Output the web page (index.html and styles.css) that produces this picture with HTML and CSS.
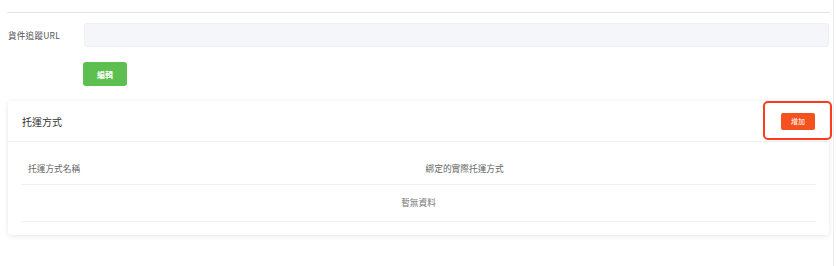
FILE: index.html
```html
<!DOCTYPE html>
<html lang="zh-Hant">

<head>
  <meta charset="UTF-8">
  <meta name="viewport" content="width=device-width, initial-scale=1.0">
  <title>托運方式</title>

  <link rel="stylesheet" href="styles.css">
</head>

<body>
  <main class="page">
    <section class="tracking">
      <div class="tracking__row">
        <label class="tracking__label" for="tracking-url">貨件追蹤URL</label>
        <input class="tracking__input" id="tracking-url" type="text">
      </div>
      <div class="tracking__actions">
        <button class="btn btn--green">編輯</button>
      </div>
    </section>

    <section class="card">
      <header class="card__header">
        <h2 class="card__title">托運方式</h2>
        <div class="card__tools">
          <button class="btn btn--orange">增加</button>
          <span class="highlight"></span>
        </div>
      </header>

      <div class="card__body">
        <table class="list">
          <thead>
            <tr>
              <th>托運方式名稱</th>
              <th>綁定的實際托運方式</th>
            </tr>
          </thead>
          <tbody>
            <tr>
              <td class="list__empty" colspan="2">暫無資料</td>
            </tr>
          </tbody>
        </table>
      </div>
    </section>
  </main>
</body>

</html>
```

FILE: styles.css
```css
html {
  box-sizing: border-box;
}

*,
*:before,
*:after {
  box-sizing: inherit;
}

body {
  margin: 0;
  background: white;
  font-family: "Noto Sans CJK TC", "Noto Sans", sans-serif;
  color: #333;
}

.page {
  width: 834px;
  min-height: 266px;
  padding: 12px 0 0 7px;
  border-right: 1px solid #ececf0;
}

.tracking {
  width: 823px;
  padding-top: 10px;
  border-top: 1px solid #e3e3ec;
}

.tracking__row {
  display: flex;
  align-items: center;
  padding-left: 1px;
}

.tracking__label {
  width: 76px;
  font-size: 8.6px;
  letter-spacing: 0.2px;
  color: #555;
}

.tracking__input {
  width: 745px;
  height: 24px;
  margin: 0;
  background: #f5f6fa;
  border: 1px solid #eef0f4;
  border-radius: 3px;
  outline: none;
}

.tracking__actions {
  margin-top: 15px;
  padding-left: 76px;
}

.btn {
  display: flex;
  align-items: center;
  justify-content: center;
  padding: 0;
  border: none;
  border-radius: 3px;
  color: white;
  font-family: inherit;
  font-weight: 700;
  cursor: pointer;
}

.btn--green {
  width: 44px;
  height: 24px;
  background: #5cbf4f;
  font-size: 8px;
}

.btn--orange {
  width: 34px;
  height: 17px;
  background: #f4511e;
  border-radius: 2px;
  font-size: 7px;
  font-weight: 400;
}

.card {
  width: 821px;
  margin: 15px 0 0 1px;
  padding-bottom: 13px;
  background: white;
  border-radius: 3px;
  box-shadow: 0 1px 5px rgba(0, 0, 0, 0.1);
}

.card__header {
  display: flex;
  align-items: center;
  justify-content: space-between;
  height: 41px;
  padding: 0 14px;
  border-bottom: 1px solid #f0f0f3;
}

.card__title {
  margin: 0;
  font-size: 10px;
  font-weight: 400;
  color: #333;
}

.card__tools {
  position: relative;
}

.highlight {
  position: absolute;
  top: -12px;
  left: -18px;
  right: -17px;
  bottom: -10px;
  border: 2.5px solid #ff3b1d;
  border-radius: 5px;
  pointer-events: none;
}

.card__body {
  padding: 12px 13px 0;
}

.list {
  width: 100%;
  border-collapse: collapse;
  table-layout: fixed;
}

.list th {
  height: 30px;
  padding: 0 7px;
  text-align: left;
  font-size: 8.7px;
  font-weight: 400;
  color: #666;
  border-bottom: 1px solid #f0f0f2;
}

.list td {
  height: 37px;
  font-size: 8.7px;
  color: #777;
  border-bottom: 1px solid #f0f0f2;
}

.list__empty {
  text-align: center;
}
```
